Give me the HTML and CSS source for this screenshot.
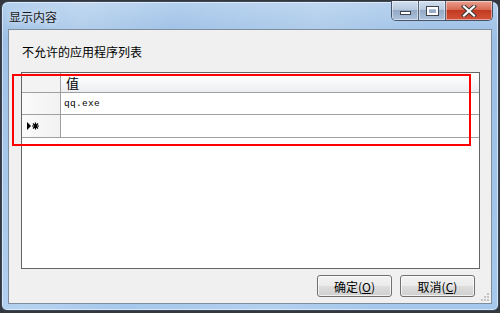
FILE: index.html
```html
<!DOCTYPE html>
<html lang="zh-CN">
<head>
    <meta charset="UTF-8">
    <title>显示内容</title>
    <link rel="stylesheet" href="styles.css">
</head>
<body>
    <div class="window">
        <div class="titlebar">
            <span class="title">显示内容</span>
            <div class="caption-buttons">
                <div class="cap cap-min"><span class="min-glyph"></span></div>
                <div class="cap cap-max"><span class="max-glyph"></span></div>
                <div class="cap cap-close">
                    <svg width="16" height="12" viewBox="0 0 16 12">
                        <path d="M3 1.5 L13 10.5 M13 1.5 L3 10.5" stroke="#3b3b3b" stroke-width="4.2" stroke-linecap="square"/>
                        <path d="M3 1.5 L13 10.5 M13 1.5 L3 10.5" stroke="#ffffff" stroke-width="2.2" stroke-linecap="square"/>
                    </svg>
                </div>
            </div>
        </div>

        <div class="client">
            <div class="label">不允许的应用程序列表</div>

            <div class="grid">
                <div class="grid-row header-row">
                    <div class="row-head corner"></div>
                    <div class="cell col-head">值</div>
                </div>
                <div class="grid-row">
                    <div class="row-head"></div>
                    <div class="cell value">qq.exe</div>
                </div>
                <div class="grid-row new-row">
                    <div class="row-head">
                        <!-- 当前行 + 新行标记 -->
                        <svg width="12" height="8" viewBox="0 0 12 8">
                            <polygon points="0,0 4,4 0,8" fill="#000"/>
                            <path d="M8.5 0.5 V7.5 M5 4 H12 M6 1.5 L11 6.5 M11 1.5 L6 6.5" stroke="#000" stroke-width="1.2"/>
                        </svg>
                    </div>
                    <div class="cell"></div>
                </div>
            </div>

            <div class="buttons">
                <button class="btn">确定(<u>O</u>)</button>
                <button class="btn">取消(<u>C</u>)</button>
            </div>

            <svg class="grip" width="10" height="10" viewBox="0 0 10 10">
                <rect x="7" y="1" width="2" height="2" fill="#c4c4c4"/>
                <rect x="4" y="4" width="2" height="2" fill="#c4c4c4"/>
                <rect x="7" y="4" width="2" height="2" fill="#c4c4c4"/>
                <rect x="1" y="7" width="2" height="2" fill="#c4c4c4"/>
                <rect x="4" y="7" width="2" height="2" fill="#c4c4c4"/>
                <rect x="7" y="7" width="2" height="2" fill="#c4c4c4"/>
            </svg>
        </div>
    </div>

    <div class="annotation"></div>
</body>
</html>
```

FILE: styles.css
```css
body {
    margin: 0;
    width: 500px;
    height: 313px;
    overflow: hidden;
    background: #33383e;
    font-family: "Noto Sans CJK SC", "Liberation Sans", sans-serif;
    position: relative;
}
.window {
    box-sizing: border-box;
    margin: 1px 0 0 1px;
    width: 498px;
    height: 310px;
    border: 1px solid #3c4656;
    border-radius: 7px 7px 6px 6px;
    padding: 0 6px 6px 6px;
    background:
        linear-gradient(100deg, rgba(255,255,255,0) 0%, rgba(255,255,255,0.18) 15%, rgba(255,255,255,0) 32%, rgba(255,255,255,0.15) 58%, rgba(255,255,255,0) 78%),
        linear-gradient(180deg, #b4d0ee 0%, #9cbfe5 12%, #a6c8ec 100%);
    box-shadow: inset 0 0 0 1px rgba(255,255,255,0.5);
    display: flex;
    flex-direction: column;
}
.titlebar {
    height: 27px;
    position: relative;
    display: flex;
    align-items: center;
}
.title {
    font-size: 12px;
    color: #1a1a1a;
    padding-left: 1px;
    margin-top: 2px;
    text-shadow: 0 0 6px rgba(255,255,255,0.9);
}
.caption-buttons {
    position: absolute;
    top: -1px;
    right: -1px;
    display: flex;
    height: 19px;
    border: 1px solid #47536a;
    border-top: none;
    border-radius: 0 0 5px 5px;
    overflow: hidden;
}
.cap {
    height: 19px;
    display: flex;
    align-items: center;
    justify-content: center;
    box-shadow: inset 0 0 0 1px rgba(255,255,255,0.45);
}
.cap-min, .cap-max {
    width: 26px;
    background: linear-gradient(180deg, #d3e0ef 0%, #b7c9df 45%, #93a9c5 50%, #aec2dc 100%);
    border-right: 1px solid #56647a;
}
.cap-close {
    width: 46px;
    background: linear-gradient(180deg, #eaa191 0%, #d86a52 45%, #c13a21 50%, #d3533a 100%);
}
.min-glyph {
    width: 9px;
    height: 2px;
    margin-top: 5px;
    background: #fff;
    border: 1px solid #3f4650;
}
.max-glyph {
    width: 7px;
    height: 4px;
    border: 2px solid #fff;
    outline: 1px solid #3f4650;
}
.client {
    flex: 1;
    position: relative;
    background: #f0f0f0;
    border: 1px solid #7f8e9e;
    display: flex;
    flex-direction: column;
}
.label {
    font-size: 12px;
    line-height: 16px;
    color: #000;
    padding: 14px 0 0 13px;
}
.grid {
    margin: 12px 11px 0 12px;
    height: 197px;
    box-sizing: border-box;
    border: 1px solid #646464;
    background: #fff;
}
.grid-row {
    display: flex;
    height: 22px;
    border-bottom: 1px solid #a0a0a0;
    box-sizing: border-box;
}
.header-row {
    height: 20px;
}
.new-row {
    height: 23px;
}
.row-head {
    width: 39px;
    flex: none;
    background: linear-gradient(90deg, #fbfbfb 0%, #f1f1f1 100%);
    border-right: 1px solid #a0a0a0;
    display: flex;
    align-items: center;
    padding-left: 5px;
    box-sizing: border-box;
}
.corner {
    background: #f3f3f3;
}
.cell {
    flex: 1;
    display: flex;
    align-items: center;
}
.col-head {
    font-size: 13px;
    color: #000;
    padding-left: 5px;
    background: linear-gradient(180deg, #ffffff 0%, #f7f8fa 50%, #ebedf0 100%);
}
.value {
    font-family: "Liberation Mono", monospace;
    font-size: 9.5px;
    letter-spacing: 0.3px;
    color: #000;
    padding-left: 3px;
}
.buttons {
    display: flex;
    justify-content: flex-end;
    gap: 8px;
    margin: 6px 16px 0 0;
}
.btn {
    width: 75px;
    height: 22px;
    padding: 0;
    font-family: "Noto Sans CJK SC", "Liberation Sans", sans-serif;
    font-size: 12px;
    color: #000;
    border: 1px solid #707070;
    border-radius: 3px;
    background: linear-gradient(180deg, #f2f2f2 0%, #ebebeb 48%, #dddddd 52%, #cfcfcf 100%);
    box-shadow: inset 0 0 0 1px rgba(255,255,255,0.7);
}
.grip {
    position: absolute;
    right: 1px;
    bottom: 1px;
}
.annotation {
    position: absolute;
    left: 12px;
    top: 74px;
    width: 455px;
    height: 68px;
    border: 2px solid #ff0000;
}
```
